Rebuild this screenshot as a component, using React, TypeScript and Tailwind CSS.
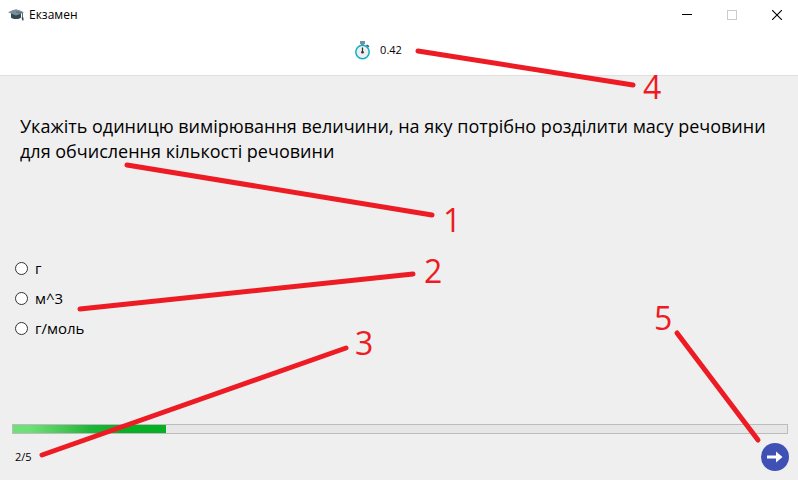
import { useState } from "react";

const options = ["г", "м^3", "г/моль"];

const callouts = [
  { label: "1", x: 443, y: 232, line: [127, 165, 432, 215] },
  { label: "2", x: 424, y: 283, line: [80, 309, 413, 274] },
  { label: "3", x: 355, y: 355, line: [42, 455, 346, 348] },
  { label: "4", x: 643, y: 99, line: [418, 51, 633, 85] },
  { label: "5", x: 654, y: 330, line: [677, 333, 758, 440] },
];

function CapIcon() {
  return (
    <svg width="16" height="16" viewBox="0 0 16 16" aria-hidden="true">
      <path d="M3 6h10v4.5c-2 2-8 2-10 0z" fill="#37474f" />
      <path d="M0 5.2C3 4 6 2.6 8 2.3c2 .3 5 1.700 8 2.900L8 8.400z" fill="#78909c" />
      <path d="M8 5l6.5 1v7" fill="none" stroke="#546e7a" />
      <path d="M13.500 10.500h2v3h-1z" fill="#37474f" />
    </svg>
  );
}

function StopwatchIcon() {
  return (
    <svg width="16" height="20" viewBox="0 0 16 20" aria-hidden="true">
      <path d="M5 1h5v3H5zM6 4h3v2H6z" fill="#78909c" />
      <path d="m12 4.500 2.400 1.500-1 1.500-2.400-2z" fill="#455a64" />
      <circle cx="7.500" cy="12" r="6.700" fill="#eeeeee" stroke="#12aec6" strokeWidth="1.500" />
      <path d="M7.500 7.500V12" stroke="#263238" strokeWidth="1.200" />
      <circle cx="7.500" cy="12.200" r="1.300" fill="#263238" />
    </svg>
  );
}

function TitleBar() {
  return (
    <header className="flex h-[30px] items-center pl-2">
      <CapIcon />
      <h1 className="ml-[5px] text-[12px] leading-4">Екзамен</h1>
      <div className="ml-auto flex h-full">
        <button type="button" aria-label="Згорнути" className="flex h-full w-[42px] items-center justify-center">
          <svg width="10" height="10" viewBox="0 0 10 10" shapeRendering="crispEdges">
            <path d="M0 4.500h10" stroke="#000" />
          </svg>
        </button>
        <button type="button" aria-label="Розгорнути" disabled className="flex h-full w-12 items-center justify-center">
          <svg width="10" height="10" viewBox="0 0 10 10" shapeRendering="crispEdges">
            <path d="M.5.5h9v9h-9z" fill="none" stroke="#cccccc" />
          </svg>
        </button>
        <button type="button" aria-label="Закрити" className="flex h-full w-[42px] items-center justify-center">
          <svg width="10" height="10" viewBox="0 0 10 10">
            <path d="m0 0 10 10M10 0 0 10" stroke="#000" strokeWidth="1.100" />
          </svg>
        </button>
      </div>
    </header>
  );
}

function Callouts() {
  return (
    <svg
      width="798"
      height="480"
      viewBox="0 0 798 480"
      className="pointer-events-none absolute top-0 left-0"
    >
      {callouts.map((c) => (
        <g key={c.label}>
          <line
            x1={c.line[0]}
            y1={c.line[1]}
            x2={c.line[2]}
            y2={c.line[3]}
            stroke="#ed1c24"
            strokeWidth="5"
            strokeLinecap="round"
          />
          <text x={c.x} y={c.y} fill="#ed1c24" className="text-[32px]">
            {c.label}
          </text>
        </g>
      ))}
    </svg>
  );
}

export default function App() {
  const [answer, setAnswer] = useState("");

  return (
    <div className="relative flex min-h-screen flex-col overflow-hidden bg-[#efefef] font-['Open_Sans','Noto_Sans',sans-serif] text-black">
      <div className="border-b border-[#dfdfdf] bg-white">
        <TitleBar />
        <div className="flex h-[45px] items-start justify-center gap-[9px] pt-[10px] pr-[41px]">
          <StopwatchIcon />
          <span className="text-[11px] leading-5">0.42</span>
        </div>
      </div>

      <main className="flex flex-1 flex-col">
        <fieldset>
          <legend className="min-h-[138px] px-5 pt-[38px] text-[18px] leading-[25px]">
            Укажіть одиницю вимірювання величини, на яку потрібно розділити масу речовини для
            обчислення кількості речовини
          </legend>
          <div className="flex flex-col px-[15px] pt-[39px]">
            {options.map((option) => (
              <label key={option} className="flex h-[30px] items-center gap-[7px] text-[15px] leading-5">
                <input
                  type="radio"
                  name="answer"
                  value={option}
                  checked={answer === option}
                  onChange={() => setAnswer(option)}
                  className="size-[13px] appearance-none rounded-full border border-[#333333] bg-white checked:border-4"
                />
                {option}
              </label>
            ))}
          </div>
        </fieldset>

        <div className="mt-auto pr-[10px] pl-3">
          <div
            role="progressbar"
            aria-label="Прогрес"
            aria-valuemin={0}
            aria-valuemax={5}
            aria-valuenow={1}
            className="h-[10px] border border-[#bcbcbc] bg-[#e6e6e6]"
          >
            <div className="h-full w-[19.8%] bg-linear-to-r from-[#6fe079] from-10% via-[#1eb63b] via-50% to-[#06b025] to-70%" />
          </div>
        </div>
        <footer className="flex h-[46px] items-center justify-between pr-[9px] pl-[15px]">
          <span className="text-[11px] leading-4">2/5</span>
          <button
            type="button"
            aria-label="Далі"
            className="flex size-7 items-center justify-center rounded-full bg-[#3f51b5]"
          >
            <svg width="16" height="12" viewBox="0 0 16 12" aria-hidden="true">
              <path d="M0 4.500h9V.5L15.500 6 9 11.500v-4H0z" fill="#fff" />
            </svg>
          </button>
        </footer>
      </main>

      <Callouts />
    </div>
  );
}
